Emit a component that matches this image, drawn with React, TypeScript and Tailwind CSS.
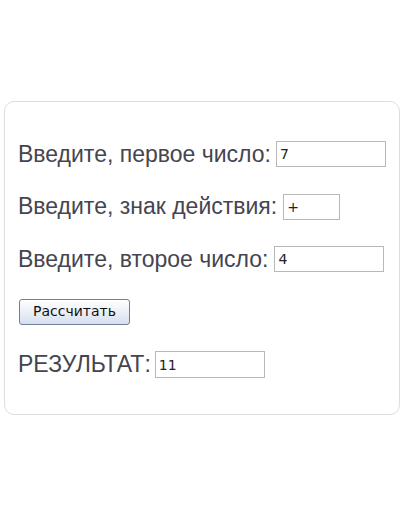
const labelCls = "text-[23px] leading-none text-[#45454f] font-['Liberation_Sans',Arial,sans-serif]";
const inputCls =
  "h-[26px] border border-[#b8b8b8] bg-white px-[3px] text-[14px] text-[#222] font-['DejaVu_Sans',sans-serif] outline-none";

export default function App() {
  return (
    <div className="min-h-[516px] w-[406px] bg-white pt-[101px]">
      <div className="ml-[4px] h-[314px] w-[396px] rounded-[10px] border border-[#dedede] pl-[13px] pt-[39px]">
        <div className="flex flex-col gap-[26.5px]">
          <div className="flex h-[26px] items-center gap-[5px]">
            <span className={labelCls}>Введите, первое число:</span>
            <input className={`${inputCls} w-[110px]`} defaultValue="7" />
          </div>
          <div className="flex h-[26px] items-center gap-[6px]">
            <span className={labelCls}>Введите, знак действия:</span>
            <input className={`${inputCls} w-[57px]`} defaultValue="+" />
          </div>
          <div className="flex h-[26px] items-center gap-[6px]">
            <span className={labelCls}>Введите, второе число:</span>
            <input className={`${inputCls} w-[110px]`} defaultValue="4" />
          </div>
          <div className="flex h-[26px] items-center">
            <button className="ml-[1px] h-[26px] w-[111px] rounded-[3px] border border-[#6f7f99] bg-gradient-to-b from-white to-[#d6dfee] text-[14px] text-[#111] font-['DejaVu_Sans',sans-serif]">
              Рассчитать
            </button>
          </div>
          <div className="flex h-[27px] items-center gap-[4px]">
            <span className={labelCls}>РЕЗУЛЬТАТ:</span>
            <input className={`${inputCls} h-[27px] w-[110px]`} defaultValue="11" />
          </div>
        </div>
      </div>
    </div>
  );
}
